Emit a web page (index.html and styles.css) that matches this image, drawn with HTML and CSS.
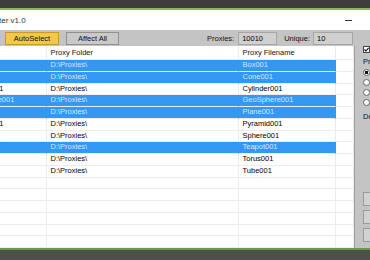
FILE: index.html
```html
<!DOCTYPE html>
<html lang="en">
<head>
    <meta charset="UTF-8">
    <title>Proxy Manager</title>
    <link rel="stylesheet" href="styles.css">
</head>
<body>
    <div class="desk-top"></div>
    <div class="window">
        <div class="titlebar">
            <span class="title">ter v1.0</span>
            <span class="min"></span>
        </div>
        <div class="toolbar">
            <button class="btn btn-auto">AutoSelect</button>
            <button class="btn">Affect All</button>
            <span class="spacer"></span>
            <span class="stat-label">Proxies:</span>
            <span class="stat-box">10010</span>
            <span class="stat-label stat-label-next">Unique:</span>
            <span class="stat-box stat-box-wide">10</span>
        </div>
        <div class="main">
            <div class="list">
                <div class="row head"><div class="cell"></div><div class="cell">Proxy Folder</div><div class="cell">Proxy Filename</div><div class="cell"></div></div>
                <div class="row sel"><div class="cell">Box001</div><div class="cell">D:\Proxies\</div><div class="cell">Box001</div><div class="cell"></div></div>
                <div class="row sel"><div class="cell">Cone001</div><div class="cell">D:\Proxies\</div><div class="cell">Cone001</div><div class="cell"></div></div>
                <div class="row"><div class="cell">Cylinder001</div><div class="cell">D:\Proxies\</div><div class="cell">Cylinder001</div><div class="cell"></div></div>
                <div class="row sel"><div class="cell">GeoSphere001</div><div class="cell">D:\Proxies\</div><div class="cell">GeoSphere001</div><div class="cell"></div></div>
                <div class="row sel"><div class="cell">Plane001</div><div class="cell">D:\Proxies\</div><div class="cell">Plane001</div><div class="cell"></div></div>
                <div class="row"><div class="cell">Pyramid001</div><div class="cell">D:\Proxies\</div><div class="cell">Pyramid001</div><div class="cell"></div></div>
                <div class="row"><div class="cell">Sphere001</div><div class="cell">D:\Proxies\</div><div class="cell">Sphere001</div><div class="cell"></div></div>
                <div class="row sel"><div class="cell">Teapot001</div><div class="cell">D:\Proxies\</div><div class="cell">Teapot001</div><div class="cell"></div></div>
                <div class="row"><div class="cell">Torus001</div><div class="cell">D:\Proxies\</div><div class="cell">Torus001</div><div class="cell"></div></div>
                <div class="row"><div class="cell">Tube001</div><div class="cell">D:\Proxies\</div><div class="cell">Tube001</div><div class="cell"></div></div>
                <div class="row"><div class="cell"></div><div class="cell"></div><div class="cell"></div><div class="cell"></div></div>
                <div class="row"><div class="cell"></div><div class="cell"></div><div class="cell"></div><div class="cell"></div></div>
                <div class="row"><div class="cell"></div><div class="cell"></div><div class="cell"></div><div class="cell"></div></div>
                <div class="row"><div class="cell"></div><div class="cell"></div><div class="cell"></div><div class="cell"></div></div>
                <div class="row"><div class="cell"></div><div class="cell"></div><div class="cell"></div><div class="cell"></div></div>
                <div class="row"><div class="cell"></div><div class="cell"></div><div class="cell"></div><div class="cell"></div></div>
            </div>
            <div class="side">
                <span class="check">
                    <svg width="5" height="5" viewBox="0 0 5 5"><path d="M0.5 2.5 L2 4 L4.6 0.8" fill="none" stroke="#111" stroke-width="1.1"/></svg>
                </span>
                <span class="side-label">Pr</span>
                <span class="radio on"></span>
                <span class="radio"></span>
                <span class="radio"></span>
                <span class="radio"></span>
                <span class="side-label side-label-low">De</span>
                <span class="side-btn side-btn-first"></span>
                <span class="side-btn"></span>
                <span class="side-btn side-btn-last"></span>
            </div>
        </div>
    </div>
    <div class="desk-bottom"></div>
</body>
</html>
```

FILE: styles.css
```css
body {
    margin: 0;
    width: 370px;
    height: 260px;
    overflow: hidden;
    background-color: #4e4e4e;
    font-family: "Liberation Sans", Arial, sans-serif;
    font-size: 7.5px;
    color: #000;
}
.desk-top {
    height: 8px;
    background-color: #3c3c3c;
    border-bottom: 2px solid #8db455;
}
.window {
    margin-left: -40px;
    width: 410px;
}
.titlebar {
    height: 20px;
    background-color: #fff;
    display: flex;
    align-items: center;
    justify-content: space-between;
    padding: 0 18px 0 39px;
    box-sizing: border-box;
}
.title {
    font-size: 8px;
    color: #333;
}
.min {
    width: 7px;
    height: 1px;
    background-color: #333;
    margin-top: 1px;
}
.toolbar {
    height: 16px;
    background-color: #c4c4c4;
    display: flex;
    align-items: center;
    padding: 0 17px 0 45px;
    box-sizing: border-box;
}
.btn {
    font: inherit;
    color: #111;
    width: 53px;
    height: 13px;
    padding: 0;
    margin-right: 7px;
    box-sizing: border-box;
    border: 1px solid #8f8f8f;
    background-color: #c9c9c9;
}
.btn-auto {
    width: 54px;
    background-color: #f2c84b;
    border-color: #c99a2a;
}
.spacer {
    flex: 1;
}
.stat-label {
    color: #111;
    margin-right: 4px;
}
.stat-label-next {
    margin-left: 7px;
    margin-right: 3px;
}
.stat-box {
    width: 39px;
    height: 13px;
    line-height: 11px;
    padding-left: 3px;
    box-sizing: border-box;
    border: 1px solid #a6a6a6;
    background-color: #d0d0d0;
}
.stat-box-wide {
    width: 40px;
}
.main {
    display: flex;
    height: 202px;
}
.list {
    width: 394px;
    background-color: #fff;
    border-right: 1px solid #9d9d9d;
    overflow: hidden;
}
.row {
    display: grid;
    grid-template-columns: 87px 192px 97px 1fr;
    height: 11.75px;
}
.row.head {
    height: 14px;
}
.cell {
    padding-left: 3.5px;
    line-height: 10.75px;
    white-space: nowrap;
    overflow: hidden;
    border-right: 1px solid #ebebeb;
    border-bottom: 1px solid #ededed;
}
.head .cell {
    line-height: 13px;
    color: #111;
}
.sel .cell:not(:last-child) {
    background-color: #3498f3;
    border-right-color: #3498f3;
    color: #d6e6fa;
}
.side {
    width: 15px;
    background-color: #c4c4c4;
    overflow: hidden;
    display: flex;
    flex-direction: column;
    padding-left: 8px;
    box-sizing: border-box;
}
.check {
    width: 7px;
    height: 7px;
    flex: none;
    box-sizing: border-box;
    border: 1px solid #444;
    background-color: #fff;
    display: flex;
    align-items: center;
    justify-content: center;
}
.side-label {
    margin-top: 5px;
    line-height: 8px;
    color: #111;
}
.side-label-low {
    margin-top: 7px;
}
.radio {
    width: 7px;
    height: 7px;
    flex: none;
    margin-top: 3px;
    box-sizing: border-box;
    border: 1px solid #666;
    border-radius: 50%;
    background-color: #fff;
}
.radio.on {
    background: radial-gradient(circle, #111 45%, #fff 50%);
}
.side-btn {
    width: 30px;
    height: 14px;
    flex: none;
    box-sizing: border-box;
    border: 1px solid #9a9a9a;
    background-color: #d2d2d2;
    margin-bottom: 4px;
}
.side-btn-first {
    margin-top: auto;
}
.side-btn-last {
    margin-bottom: 6px;
}
.desk-bottom {
    height: 10px;
    background-color: #4e4e4e;
    border-top: 2px solid #6b9a3f;
}
```
